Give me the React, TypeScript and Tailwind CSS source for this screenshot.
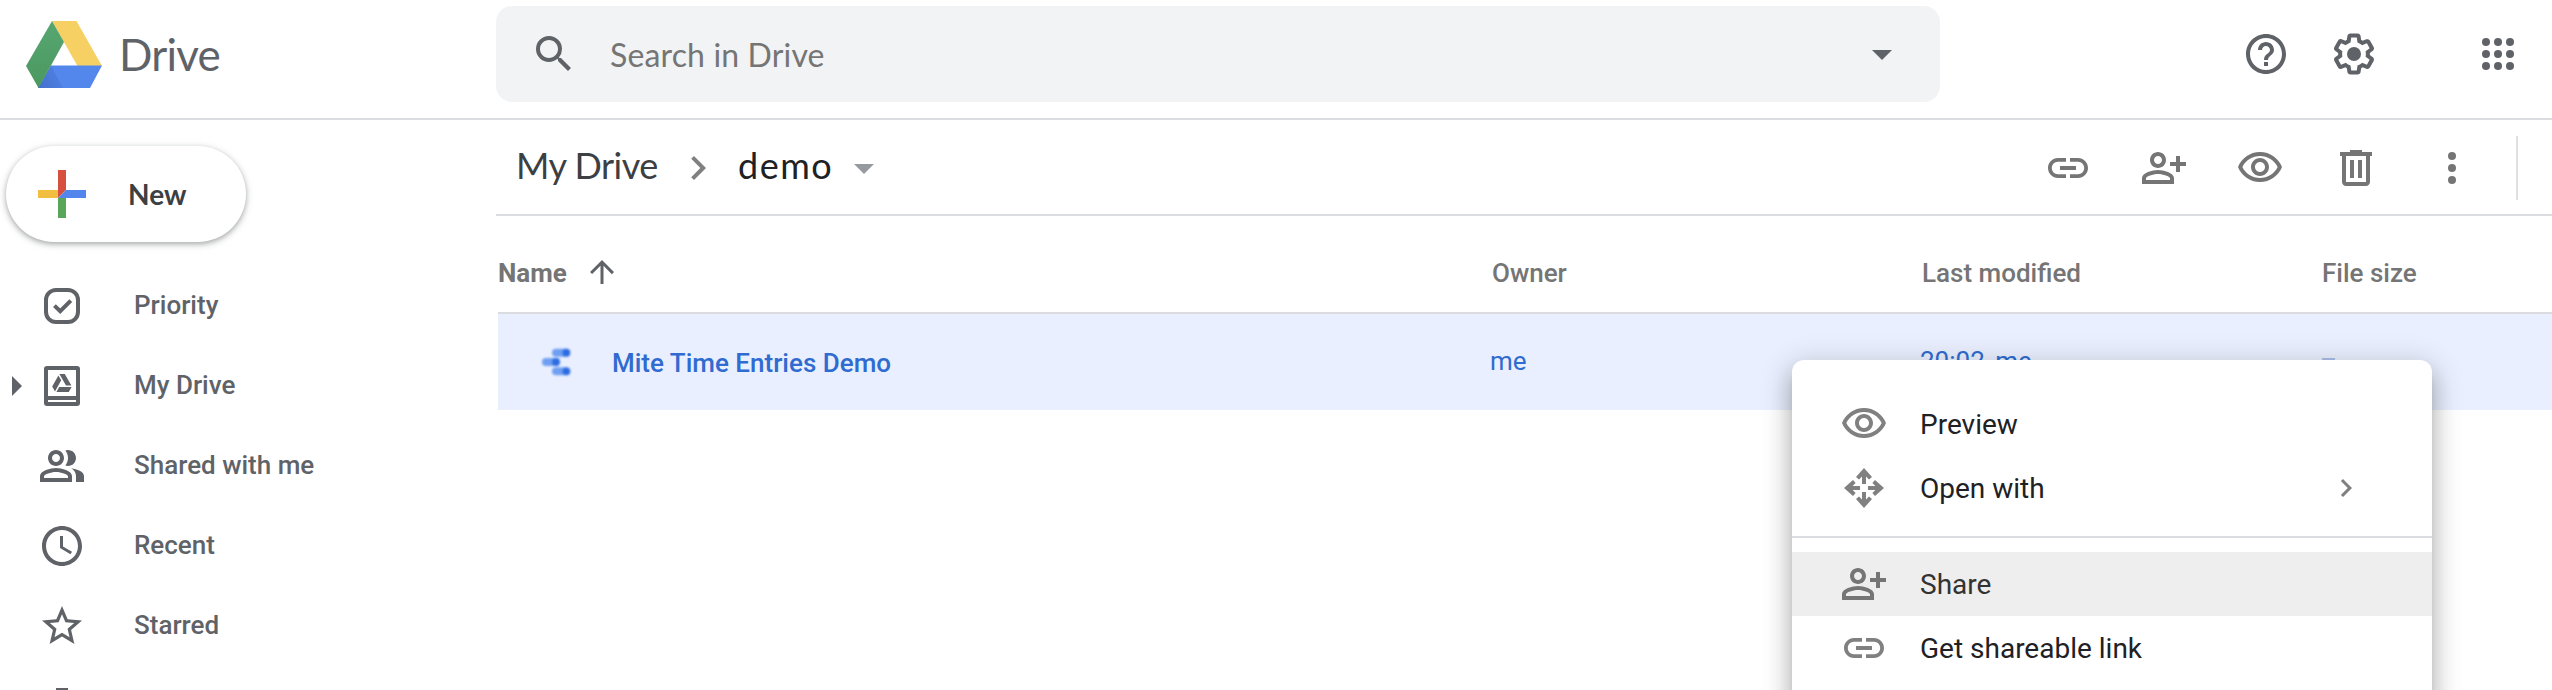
import React from "react";

type IconProps = { size?: number; className?: string; children: React.ReactNode };

function Icon({ size = 48, className = "", children }: IconProps) {
  return (
    <svg width={size} height={size} viewBox="0 0 24 24" fill="currentColor" className={`block shrink-0 ${className}`}>
      {children}
    </svg>
  );
}

const P = {
  search:
    "M15.5 14h-.79l-.28-.27A6.471 6.471 0 0 0 16 9.5 6.5 6.5 0 1 0 9.5 16c1.61 0 3.09-.59 4.23-1.57l.27.28v.79l5 4.99L20.49 19l-4.99-5zm-6 0C7.01 14 5 11.99 5 9.5S7.01 5 9.5 5 14 7.01 14 9.5 11.99 14 9.5 14z",
  help: "M11 18h2v-2h-2v2zm1-16C6.48 2 2 6.48 2 12s4.48 10 10 10 10-4.48 10-10S17.52 2 12 2zm0 18c-4.41 0-8-3.59-8-8s3.59-8 8-8 8 3.59 8 8-3.59 8-8 8zm0-14c-2.21 0-4 1.79-4 4h2c0-1.1.9-2 2-2s2 .9 2 2c0 2-3 1.75-3 5h2c0-2.25 3-2.5 3-5 0-2.21-1.79-4-4-4z",
  gear: "M13.85 22.25h-3.7c-.74 0-1.36-.54-1.45-1.27l-.27-1.89c-.27-.14-.53-.29-.79-.46l-1.8.72c-.7.26-1.47-.03-1.81-.65L2.2 15.53c-.35-.66-.2-1.44.36-1.88l1.53-1.19c-.01-.15-.02-.3-.02-.46 0-.15.01-.31.02-.46l-1.52-1.19c-.59-.45-.74-1.26-.37-1.88l1.85-3.19c.34-.62 1.11-.9 1.79-.63l1.81.73c.26-.17.52-.32.78-.46l.27-1.91c.09-.7.71-1.25 1.44-1.25h3.7c.74 0 1.36.54 1.45 1.27l.27 1.89c.27.14.53.29.79.46l1.8-.72c.71-.26 1.48.03 1.82.65l1.84 3.18c.36.66.2 1.44-.36 1.88l-1.52 1.19c.01.15.02.3.02.46s-.01.31-.02.46l1.52 1.19c.56.45.72 1.23.37 1.86l-1.86 3.22c-.34.62-1.11.9-1.8.63l-1.8-.72c-.26.17-.52.32-.78.46l-.27 1.91c-.1.68-.72 1.22-1.46 1.22zm-3.23-2h2.76l.37-2.55.53-.22c.44-.18.88-.44 1.34-.78l.45-.34 2.38.96 1.38-2.4-2.03-1.58.07-.56c.03-.26.06-.51.06-.78s-.03-.53-.06-.78l-.07-.56 2.03-1.58-1.39-2.4-2.39.96-.45-.35c-.42-.32-.87-.58-1.33-.77l-.52-.22-.37-2.55h-2.76l-.37 2.55-.53.21c-.44.19-.88.44-1.34.79l-.45.33-2.38-.95-1.39 2.39 2.03 1.58-.07.56a7 7 0 0 0-.06.79c0 .26.02.53.06.78l.07.56-2.03 1.58 1.38 2.4 2.39-.96.45.35c.43.33.86.58 1.33.77l.53.22.38 2.55z",
  link: "M3.9 12c0-1.71 1.39-3.1 3.1-3.1h4V7H7c-2.76 0-5 2.24-5 5s2.24 5 5 5h4v-1.9H7c-1.71 0-3.1-1.39-3.1-3.1zM8 13h8v-2H8v2zm9-6h-4v1.9h4c1.71 0 3.1 1.39 3.1 3.1s-1.39 3.1-3.1 3.1h-4V17h4c2.76 0 5-2.24 5-5s-2.24-5-5-5z",
  personAdd:
    "M9 12c2.21 0 4-1.79 4-4s-1.79-4-4-4-4 1.79-4 4 1.79 4 4 4zm0-6c1.1 0 2 .9 2 2s-.9 2-2 2-2-.9-2-2 .9-2 2-2zm0 7c-2.67 0-8 1.34-8 4v3h16v-3c0-2.66-5.33-4-8-4zm6 5H3v-.99C3.2 16.29 6.3 15 9 15s5.8 1.29 6 2v1zM20 9V6h-2v3h-3v2h3v3h2v-3h3V9h-3z",
  eye: "M12 6c3.79 0 7.17 2.13 8.82 5.5-1.65 3.37-5.02 5.5-8.82 5.5S4.83 14.87 3.18 11.5C4.83 8.13 8.21 6 12 6m0-2C7 4 2.73 7.11 1 11.5c1.73 4.39 6 7.5 11 7.5s9.27-3.11 11-7.5c-1.73-4.39-6-7.5-11-7.5zm0 5c1.38 0 2.5 1.12 2.5 2.5s-1.12 2.5-2.5 2.5-2.5-1.12-2.5-2.5 1.12-2.5 2.5-2.5m0-2c-2.48 0-4.5 2.02-4.5 4.5s2.02 4.5 4.5 4.5 4.5-2.02 4.5-4.5-2.02-4.5-4.5-4.5z",
  trash:
    "M15 4V3H9v1H4v2h1v13c0 1.1.9 2 2 2h10c1.1 0 2-.9 2-2V6h1V4h-5zm2 15H7V6h10v13zM9 8h2v9H9V8zm4 0h2v9h-2V8z",
  drop: "M7 10l5 5 5-5z",
  chevron: "M10 6L8.59 7.41 13.17 12l-4.58 4.59L10 18l6-6z",
  up: "M4 12l1.41 1.41L11 7.83V20h2V7.83l5.58 5.59L20 12l-8-8-8 8z",
  people:
    "M9 12c2.21 0 4-1.79 4-4s-1.79-4-4-4-4 1.79-4 4 1.79 4 4 4zm0-6c1.1 0 2 .9 2 2s-.9 2-2 2-2-.9-2-2 .9-2 2-2zm0 7c-2.67 0-8 1.34-8 4v3h16v-3c0-2.66-5.33-4-8-4zm6 5H3v-.99C3.2 16.29 6.3 15 9 15s5.8 1.29 6 2v1zM15 12c2.21 0 4-1.79 4-4s-1.79-4-4-4c-.47 0-.91.1-1.33.24C14.5 5.27 15 6.58 15 8s-.5 2.73-1.33 3.76c.42.14.86.24 1.33.24zM16.66 13.13C18.03 14.06 19 15.32 19 17v3h4v-3c0-2.18-3.58-3.47-6.34-3.87z",
  clock:
    "M11.99 2C6.47 2 2 6.48 2 12s4.47 10 9.99 10C17.52 22 22 17.52 22 12S17.52 2 11.99 2zM12 20c-4.42 0-8-3.58-8-8s3.58-8 8-8 8 3.58 8 8-3.58 8-8 8zM12.5 7H11v6l5.25 3.15.75-1.23-4.5-2.67z",
  star: "M22 9.24l-7.19-.62L12 2 9.19 8.63 2 9.24l5.46 4.73L5.82 21 12 17.27 18.18 21l-1.63-7.03L22 9.24zM12 15.4l-3.76 2.27 1-4.28-3.32-2.88 4.38-.38L12 6.1l1.71 4.04 4.38.38-3.32 2.88 1 4.28L12 15.4z",
};

function PriorityIcon() {
  return (
    <Icon>
      <rect x="4" y="4" width="16" height="16" rx="5" fill="none" stroke="currentColor" strokeWidth="2" />
      <path d="M8.2 11.8l2.900 2.800 5.300-5.300" fill="none" stroke="currentColor" strokeWidth="2" />
    </Icon>
  );
}

function MyDriveIcon() {
  return (
    <Icon>
      <path
        fillRule="evenodd"
        d="M4.5 2h15A1.5 1.5 0 0 1 21 3.5v17a1.5 1.5 0 0 1-1.5 1.5h-15A1.5 1.5 0 0 1 3 20.500v-17A1.5 1.5 0 0 1 4.500 2zM5 4v13h14V4zM5 19v1h14v-1z"
      />
      <path d="M10.700 6h2.700l3.300 5.700h-2.700zM10.200 6.700l1.400 2.400-3.100 5.600-1.400-2.500zM10.600 12.500h6.200l-1.400 2.500H9.200z" />
    </Icon>
  );
}

function OpenWithIcon() {
  return (
    <Icon>
      <path d="M12 2l4 4.500-1.500 1.300L13 6.300V10h-2V6.300L9.500 7.800 8 6.500zM12 22l4-4.500-1.500-1.300L13 17.700V14h-2v3.700l-1.500-1.500L8 17.500zM2 12l4.500-4 1.300 1.500L6.300 11H10v2H6.300l1.500 1.500L6.500 16zM22 12l-4.500-4-1.300 1.500 1.500 1.500H14v2h3.700l-1.500 1.500 1.300 1.500z" />
    </Icon>
  );
}

function DriveLogo() {
  return (
    <svg width="76" height="67" viewBox="0 0 76 67" className="block shrink-0">
      <defs>
        <linearGradient id="green" x1="0" y1="0" x2="0" y2="1">
          <stop offset="0" stopColor="#57a671" />
          <stop offset="1" stopColor="#4b9960" />
        </linearGradient>
        <linearGradient id="fold" x1="0" y1="1" x2="1" y2="0.6">
          <stop offset="0" stopColor="#4571cd" />
          <stop offset="1" stopColor="#4f80e2" />
        </linearGradient>
      </defs>
      <path d="M26 0H50.500L76 45H51.500z" fill="#f7d063" />
      <path d="M25 44.500H76L64 67H12z" fill="#5387ec" />
      <path d="M25 44.500L37 67H12z" fill="url(#fold)" />
      <path d="M26 0L38 21 12.500 67 0 45z" fill="url(#green)" />
    </svg>
  );
}

function Plus() {
  return (
    <svg width="48" height="48" viewBox="0 0 48 48" className="block shrink-0">
      <path d="M0 20h20v8H0z" fill="#f1be42" />
      <path d="M20 0h8v20l-8 8z" fill="#d5503e" />
      <path d="M28 20h20v8H20z" fill="#5286ec" />
      <path d="M20 28h8v20h-8z" fill="#5ba55b" />
    </svg>
  );
}

function DataStudioIcon() {
  return (
    <svg width="32" height="32" viewBox="0 0 32 32" className="block shrink-0 blur-[1px]">
      <rect x="12" y="2.700" width="18" height="8" rx="4" fill="#6f9ff2" />
      <circle cx="26.400" cy="6.700" r="3.900" fill="#2c6ce0" />
      <rect x="2" y="12" width="18" height="8" rx="4" fill="#6f9ff2" />
      <circle cx="16" cy="16" r="3.900" fill="#2c6ce0" />
      <rect x="12" y="21.300" width="18" height="8" rx="4" fill="#6f9ff2" />
      <circle cx="26.400" cy="25.300" r="3.900" fill="#2c6ce0" />
    </svg>
  );
}

function NavItem({ icon, label, expandable }: { icon: React.ReactNode; label?: string; expandable?: boolean }) {
  return (
    <li className="flex h-20 items-center text-[#5f6368]">
      <span className="flex w-[38px] shrink-0 pl-3">
        {expandable && (
          <svg width="10" height="20" viewBox="0 0 10 20" className="block" fill="currentColor">
            <path d="M0 0l10 10L0 20z" />
          </svg>
        )}
      </span>
      {icon}
      {label && <span className="pb-0.5 pl-12 text-[26px] font-medium">{label}</span>}
    </li>
  );
}

function MenuItem({ icon, label, active, submenu }: { icon: React.ReactNode; label: string; active?: boolean; submenu?: boolean }) {
  return (
    <li className={active ? "flex h-16 items-center bg-[#eeeeee] pl-12 text-[#333333]" : "flex h-16 items-center pl-12 text-[#202124]"}>
      <span className={active ? "text-[#757575]" : "text-[#808080]"}>{icon}</span>
      <span className="flex-1 pt-0.5 pl-8 text-[28px]">{label}</span>
      {submenu && (
        <Icon size={36} className="mr-[68px] text-[#808080]">
          <path d={P.chevron} />
        </Icon>
      )}
    </li>
  );
}

export default function App() {
  return (
    <div className="relative flex h-[690px] w-[2552px] flex-col overflow-hidden bg-white font-['Roboto',sans-serif] leading-none">
      <header className="flex h-[120px] shrink-0 border-b-2 border-[#dadce0] pt-1.5">
        <div className="flex h-24 w-[496px] items-center pl-[26px]">
          <DriveLogo />
          <span className="pl-[17px] font-['Lato',sans-serif] text-[44px] tracking-[-0.8px] text-[#5f6368]">Drive</span>
        </div>
        <div className="flex h-24 w-[1444px] items-center rounded-2xl bg-[#f1f3f4] pr-[34px] pl-[34px] text-[#5f6368]">
          <Icon>
            <path d={P.search} />
          </Icon>
          <span className="flex-1 pt-0.5 pl-8 font-['Lato',sans-serif] text-[32px] tracking-[0.15px] text-[#757575]">Search in Drive</span>
          <Icon>
            <path d={P.drop} />
          </Icon>
        </div>
        <div className="flex h-24 flex-1 items-center justify-end pr-[30px] text-[#5f6368]">
          <Icon className="mr-10">
            <path d={P.help} />
          </Icon>
          <Icon className="mr-24">
            <path d={P.gear} />
            <circle cx="12" cy="12" r="3.500" />
          </Icon>
          <Icon>
            {[6, 12, 18].map((y) => [6, 12, 18].map((x) => <circle key={`${x}-${y}`} cx={x} cy={y} r="2" />))}
          </Icon>
        </div>
      </header>

      <div className="flex min-h-0 flex-1">
        <aside className="w-[496px] shrink-0 pt-[26px]">
          <button className="ml-1.5 flex h-24 w-60 items-center rounded-full bg-white pl-8 shadow-[0_2px_4px_rgba(60,64,67,0.302),0_2px_6px_2px_rgba(60,64,67,0.149)]">
            <Plus />
            <span className="pl-[42px] font-['Lato',sans-serif] text-[28px] font-bold text-[#3c4043]">New</span>
          </button>
          <ul className="pt-6">
            <NavItem icon={<PriorityIcon />} label="Priority" />
            <NavItem icon={<MyDriveIcon />} label="My Drive" expandable />
            <NavItem icon={<Icon><path d={P.people} /></Icon>} label="Shared with me" />
            <NavItem icon={<Icon><path d={P.clock} /></Icon>} label="Recent" />
            <NavItem icon={<Icon><path d={P.star} /></Icon>} label="Starred" />
            <NavItem icon={<Icon><path d={P.trash} /></Icon>} />
          </ul>
        </aside>

        <main className="min-w-0 flex-1">
          <div className="flex h-24 items-center border-b-2 border-[#dadce0] pt-0.5">
            <div className="flex flex-1 items-center font-['Lato',sans-serif] text-[36px]">
              <span className="w-[178px] pb-1.5 pl-5 tracking-[-0.5px] text-[#3c4043]">My Drive</span>
              <Icon className="text-[#808080]">
                <path d={P.chevron} />
              </Icon>
              <span className="w-[118px] pb-1.5 pl-4 tracking-[1.5px] text-[#202124]">demo</span>
              <Icon className="text-[#96999d]">
                <path d={P.drop} />
              </Icon>
            </div>
            <div className="flex items-center gap-12 pr-10 text-[#757575]">
              <Icon><path d={P.link} /></Icon>
              <Icon><path d={P.personAdd} /></Icon>
              <Icon><path d={P.eye} /></Icon>
              <Icon><path d={P.trash} /></Icon>
              <Icon>
                <circle cx="12" cy="6" r="2" />
                <circle cx="12" cy="12" r="2" />
                <circle cx="12" cy="18" r="2" />
              </Icon>
            </div>
            <div className="mr-[34px] h-16 w-0.5 bg-[#e0e0e0]" />
          </div>

          <div className="ml-0.5">
            <div className="grid h-[98px] grid-cols-[994px_430px_400px_1fr] items-center border-b-2 border-[#dadce0] pt-4 text-[26px] font-medium text-[#757575]">
              <div className="flex items-center font-bold">
                <span className="w-[86px] pt-0.5">Name</span>
                <Icon size={36} className="text-[#5f6368]">
                  <path d={P.up} />
                </Icon>
              </div>
              <div className="pt-0.5">Owner</div>
              <div className="pt-0.5">Last modified</div>
              <div className="pt-0.5">File size</div>
            </div>
            <div className="grid h-24 grid-cols-[992px_430px_400px_1fr] items-center bg-[#e9effe] text-[26px] text-[#2f6bd0]">
              <div className="flex items-center pl-[42px] font-medium">
                <DataStudioIcon />
                <span className="pt-0.5 pl-10">Mite Time Entries Demo</span>
              </div>
              <div className="pb-0.5">me</div>
              <div className="pb-0.5">
                20:02 <span className="pl-1">me</span>
              </div>
              <div className="pb-1.5 text-[#a9bde8]">–</div>
            </div>
          </div>
        </main>
      </div>

      <div className="absolute top-[360px] left-[1792px] h-[420px] w-[640px] rounded-xl bg-white pt-8 shadow-[0_10px_10px_-6px_rgba(0,0,0,0.2),0_16px_20px_2px_rgba(0,0,0,0.16),0_6px_30px_4px_rgba(0,0,0,0.16)]">
        <ul>
          <MenuItem icon={<Icon><path d={P.eye} /></Icon>} label="Preview" />
          <MenuItem icon={<OpenWithIcon />} label="Open with" submenu />
          <li className="mt-4 mb-3.5 h-0.5 bg-[#dadce0]" />
          <MenuItem icon={<Icon><path d={P.personAdd} /></Icon>} label="Share" active />
          <MenuItem icon={<Icon><path d={P.link} /></Icon>} label="Get shareable link" />
        </ul>
      </div>
    </div>
  );
}
